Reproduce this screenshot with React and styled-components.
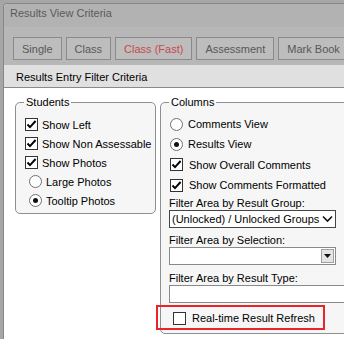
import React from 'react';
import styled, { createGlobalStyle } from 'styled-components';

const Global = createGlobalStyle`
  html, body { margin: 0; padding: 0; width: 344px; height: 339px; overflow: hidden; background: #a6a6a6; }
  body { font-family: "Liberation Sans", Arial, sans-serif; font-size: 11px; color: #000; }
  #root { height: 339px; }
`;

const Frame = styled.div`
  height: 339px;
  box-sizing: border-box;
  padding: 3px 0 0 3px;
`;

const Win = styled.div`
  height: 100%;
  box-sizing: border-box;
  border-left: 1px solid #868686;
  border-top: 1px solid #868686;
  border-top-left-radius: 4px;
  background: #fff;
  overflow: hidden;
  display: flex;
  flex-direction: column;
`;

const TitleBar = styled.div`
  height: 23px;
  box-sizing: border-box;
  padding: 3px 0 0 6px;
  line-height: 13px;
  background: #b2b2b2;
  color: #5a5a5a;
  flex: none;
`;

const Toolbar = styled.div`
  height: 38px;
  box-sizing: border-box;
  padding: 10px 0 0 9px;
  background: #b7b7b7;
  display: flex;
  gap: 4px;
  align-items: flex-start;
  overflow: hidden;
  flex: none;
`;

const Btn = styled.button`
  height: 23px;
  padding: 0 8px;
  border: 1px solid #8a8a8a;
  background: #bdbdbd;
  color: ${p => (p.$red ? '#c94a4c' : '#585858')};
  font: 11px "Liberation Sans", Arial, sans-serif;
  white-space: nowrap;
  flex: none;
`;

const Band = styled.div`
  height: 23px;
  box-sizing: border-box;
  padding: 1px 0 0 12px;
  line-height: 22px;
  background: #e0e0e0;
  border-bottom: 1px solid #8a8a8a;
  flex: none;
`;

const Content = styled.div`
  flex: 1;
  display: flex;
  align-items: flex-start;
  gap: 4px;
  padding: 7px 0 0 11px;
  background: #fff;
  overflow: hidden;
`;

const Group = styled.fieldset`
  margin: 0;
  box-sizing: border-box;
  width: ${p => p.$w}px;
  padding: ${p => p.$pad};
  border: 1px solid #8f8f8f;
  border-radius: 5px;
  background: #f6f6f6;
  flex: none;
`;

const Legend = styled.legend`
  padding: 0 2px;
  line-height: 14px;
  color: #000;
`;

const Row = styled.label`
  display: flex;
  align-items: center;
  height: ${p => p.$h || 19}px;
  padding-left: ${p => p.$indent || 0}px;
  margin-top: ${p => p.$mt || 0}px;
  gap: ${p => p.$gap || 4}px;
  white-space: nowrap;
  position: relative;
`;

const Box = styled.span`
  width: 11px;
  height: 11px;
  border: 1px solid #333;
  background: #fff;
  display: inline-flex;
  align-items: center;
  justify-content: center;
  flex: none;
`;

const Circle = styled.span`
  width: 11px;
  height: 11px;
  border: 1px solid #707070;
  border-radius: 50%;
  background: #fff;
  display: inline-flex;
  align-items: center;
  justify-content: center;
  flex: none;
  &::after {
    content: '';
    width: 5px;
    height: 5px;
    border-radius: 50%;
    background: #111;
    display: ${p => (p.$on ? 'block' : 'none')};
  }
`;

const FieldLabel = styled.div`
  line-height: 13px;
  margin-top: ${p => p.$mt}px;
  white-space: nowrap;
`;

const SelectBox = styled.div`
  width: 167px;
  height: 18px;
  box-sizing: border-box;
  border: 1px solid ${p => (p.$dark ? '#444' : '#8a8a8a')};
  background: #fff;
  display: flex;
  align-items: center;
  justify-content: space-between;
  padding-left: 2px;
  white-space: nowrap;
`;

const DropBtn = styled.span`
  width: 13px;
  height: 14px;
  margin-right: 1px;
  box-sizing: border-box;
  border: 1px solid #a0a0a0;
  background: #e4e4e4;
  display: inline-flex;
  align-items: center;
  justify-content: center;
`;

const Chevron = styled.span`
  display: inline-flex;
  margin-right: 2px;
`;

const TextBox = styled.div`
  width: 190px;
  height: 18px;
  box-sizing: border-box;
  border: 1px solid #8a8a8a;
  background: #fff;
`;

const Highlight = styled.span`
  position: absolute;
  left: -13px;
  top: -3px;
  width: 169px;
  height: 25px;
  box-sizing: border-box;
  border: 2px solid #e8262a;
  pointer-events: none;
`;

const Check = () => (
  <svg width="11" height="11" viewBox="0 0 11 11">
    <path d="M1.5 5.5 L4 8.2 L9.6 2" fill="none" stroke="#000" strokeWidth="1.9" />
  </svg>
);

const CheckRow = ({ children, on = true, indent, gap, h }) => (
  <Row $indent={indent} $gap={gap} $h={h}>
    <Box>{on && <Check />}</Box>
    <span>{children}</span>
  </Row>
);

const RadioRow = ({ children, on, indent, gap, h }) => (
  <Row $indent={indent} $gap={gap} $h={h}>
    <Circle $on={on} />
    <span>{children}</span>
  </Row>
);

export default function App() {
  return (
    <>
      <Global />
      <Frame>
        <Win>
          <TitleBar>Results View Criteria</TitleBar>
          <Toolbar>
            <Btn>Single</Btn>
            <Btn>Class</Btn>
            <Btn $red>Class (Fast)</Btn>
            <Btn>Assessment</Btn>
            <Btn>Mark Book</Btn>
          </Toolbar>
          <Band>Results Entry Filter Criteria</Band>
          <Content>
            <Group $w={141} $pad="6px 0 3px 8px">
              <Legend>Students</Legend>
              <CheckRow indent={1}>Show Left</CheckRow>
              <CheckRow indent={1}>Show Non Assessable</CheckRow>
              <CheckRow indent={1}>Show Photos</CheckRow>
              <RadioRow indent={5}>Large Photos</RadioRow>
              <RadioRow indent={5} on>Tooltip Photos</RadioRow>
            </Group>
            <Group $w={200} $pad="5px 0 5px 8px">
              <Legend>Columns</Legend>
              <RadioRow indent={1} h={20} gap={5}>Comments View</RadioRow>
              <RadioRow indent={1} h={20} gap={5} on>Results View</RadioRow>
              <CheckRow indent={1} h={21} gap={6}>Show Overall Comments</CheckRow>
              <CheckRow indent={1} h={20} gap={6}>Show Comments Formatted</CheckRow>
              <FieldLabel $mt={2}>Filter Area by Result Group:</FieldLabel>
              <SelectBox $dark>
                <span>(Unlocked) / Unlocked Groups</span>
                <Chevron>
                  <svg width="11" height="8" viewBox="0 0 11 8">
                    <path d="M1 1.5 L5.5 6 L10 1.5" fill="none" stroke="#111" strokeWidth="1.6" />
                  </svg>
                </Chevron>
              </SelectBox>
              <FieldLabel $mt={6}>Filter Area by Selection:</FieldLabel>
              <SelectBox>
                <span />
                <DropBtn>
                  <svg width="7" height="4" viewBox="0 0 7 4">
                    <path d="M0 0 H7 L3.5 4 Z" fill="#111" />
                  </svg>
                </DropBtn>
              </SelectBox>
              <FieldLabel $mt={7}>Filter Area by Result Type:</FieldLabel>
              <TextBox />
              <Row $indent={4} $gap={6} $h={20} $mt={5}>
                <Box />
                <span>Real-time Result Refresh</span>
                <Highlight />
              </Row>
            </Group>
          </Content>
        </Win>
      </Frame>
    </>
  );
}
